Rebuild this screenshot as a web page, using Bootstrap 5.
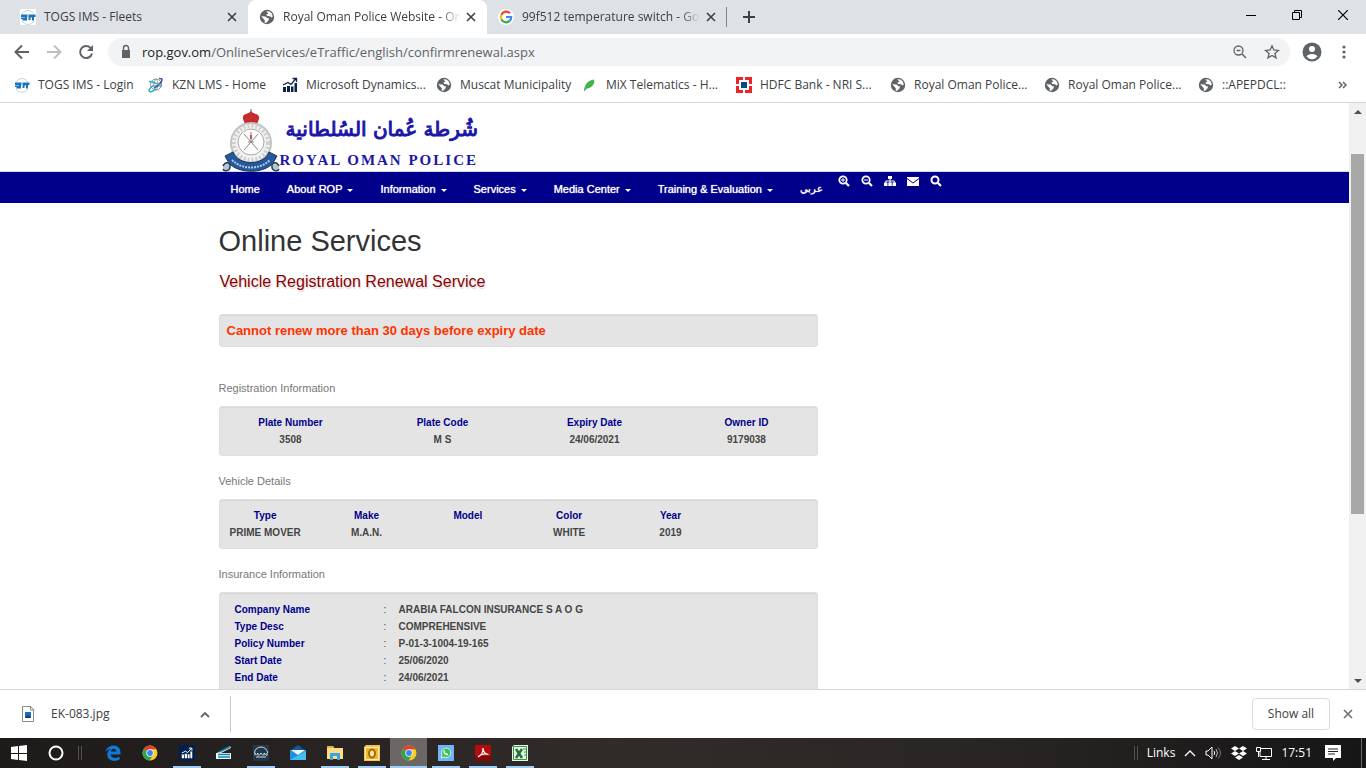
<!DOCTYPE html>
<html lang="en">
<head>
<meta charset="utf-8">
<meta name="viewport" content="width=device-width, initial-scale=1">
<title>Royal Oman Police Website - Online Services</title>
<link rel="stylesheet" href="https://cdn.jsdelivr.net/npm/bootstrap@5.3.0/dist/css/bootstrap.min.css">
<script src="https://cdn.jsdelivr.net/npm/bootstrap@5.3.0/dist/js/bootstrap.bundle.min.js"></script>
<style>
  :root { --ui: "Open Sans", "Noto Sans", sans-serif; --site: "Liberation Sans", Arial, sans-serif; --ink: #3c4043; --grey: #5f6368; }
  body { font-family: var(--ui); font-size: 12px; line-height: 16px; color: var(--ink); background: #fff; }
  svg { display: block; flex: none; }
  button { border: 0; background: none; padding: 0; color: inherit; font: inherit; }
  a { color: inherit; text-decoration: none; }

  /* browser frame */
  .tabstrip { background: #dee1e6; height: 34px; padding-left: 9px; }
  .tab-item { width: 239px; height: 34px; padding: 0 11px; }
  .tab-item.current { background: #fff; border-radius: 8px 8px 0 0; }
  .tab-title { flex: 1; margin-left: 8px; white-space: nowrap; }
  .tab-title.fade-end { -webkit-mask-image: linear-gradient(to right, #000 86%, transparent 97%); mask-image: linear-gradient(to right, #000 86%, transparent 97%); }
  .tab-sep { width: 1px; height: 20px; background: #80868b; }
  .win-btn { width: 46px; height: 30px; color: #000; }
  .toolbar { height: 36px; padding: 0 16px 0 12px; }
  .tool-btn { width: 32px; height: 28px; }
  .omnibox { height: 28px; border-radius: 14px; background: #f1f3f4; padding: 0 10px; font-size: 13px; }
  .omnibox input { border: 0; background: none; padding: 0; outline: 0; font: inherit; color: var(--grey); min-width: 0; }
  .bookmarks { height: 33px; padding: 0 14px 2px; border-bottom: 1px solid #d5d7da; }
  .bm { display: flex; align-items: center; gap: 8px; white-space: nowrap; flex: none; width: 154px; }
  .bm-short { width: 134px; }
  .bm-mid { width: 146px; }

  /* scroll bar */
  .scroll-track { width: 17px; background: #f1f1f1; }
  .scroll-top { height: 51px; padding-top: 6px; }
  .scroll-thumb { width: 13px; height: 360px; background: #a8a8a8; }

  /* site */
  .site { font-family: var(--site); min-width: 0; }
  .site-wrap { max-width: 936px; padding: 0 12px; margin: 0 auto; }
  .brand-row { height: 68px; padding: 5px 0 0 3px; }
  .brand-ar { font-family: "DejaVu Sans", sans-serif; font-size: 20px; line-height: 42px; color: #1c16a8; white-space: nowrap; height: 42px; -webkit-text-stroke: 1px #1c16a8; paint-order: stroke; }
  .brand-en { font-family: "Liberation Serif", serif; font-weight: 700; font-size: 15px; line-height: 20px; letter-spacing: 2px; color: #1c16a8; white-space: nowrap; }
  .site-nav { background: #00008b; border-top: 1px solid #d6d8e6; height: 32px; }
  .site-nav a { color: #fff; font-size: 11px; line-height: 16px; text-shadow: 0 0 1px #fff; white-space: nowrap; }
  .site-nav .dropdown-toggle::after { border-width: 3px 3px 0; margin-left: 5px; vertical-align: 1px; }
  .menu-links { gap: 27px; padding: 2px 15px 0 12px; }
  .menu-links a:lang(ar) { font-size: 10px; }
  .nav-tools { padding-bottom: 13px; gap: 11px; }
  h1 { font-size: 29px; line-height: 32px; font-weight: 400; color: #333; margin: 22px 0 0; }
  h2 { font-size: 16px; line-height: 20px; font-weight: 400; color: #8b0000; margin: 15px 0 0 1px; text-shadow: 1px 2px 1px #ddd; }
  h3 { font-size: 11px; line-height: 16px; font-weight: 400; color: #777; margin: 17px 0 10px; }
  .panel { background: #e4e4e4; border: 1px solid #dfdfdf; border-radius: 3px; box-shadow: inset 0 1px 1px #d8d8d8; }
  .warn { margin: 22px 0 33px; padding: 6px 7px 5px; font-size: 13px; line-height: 20px; font-weight: 700; color: #ff3300; }
  .panel table { font-size: 10px; line-height: 17px; font-weight: 700; color: #444; }
  .panel th { color: #00008b; }
  .panel th, .panel td { padding: 0; }
  .grid-panel { padding: 7px 0; }
  .grid-panel table { width: calc(100% + 10px); margin: 0 -5px; table-layout: fixed; text-align: center; }
  .list-panel { padding: 8px 15px 40px; }
  .c-label { width: 149px; }
  .c-colon { width: 15px; font-weight: 400; }

  /* download shelf */
  .shelf { height: 49px; border-top: 1px solid #d5d7da; padding: 0 13px 0 21px; }
  .dl-item { height: 36px; width: 210px; border-right: 1px solid #c8c8c8; }
  .show-all { height: 32px; width: 78px; margin-right: 13px; border: 1px solid #dadce0; border-radius: 4px; color: #3c4043; }

  /* task bar */
  .taskbar { height: 30px; background: linear-gradient(90deg, #1d1a1a, #322c29 45%, #2a2625 70%, #161616); color: #fff; }
  .task { width: 37px; height: 30px; display: flex; align-items: center; justify-content: center; position: relative; }
  .task.running::after { content: ""; position: absolute; bottom: 0; left: 5px; right: 4px; height: 2px; background: #a0cdf8; }
  .task.focused { background: #6b6765; }
  .task.focused::after { left: 0; right: 0; }
  .grip { width: 4px; height: 14px; border: solid #55504e; border-width: 0 1px; }
  .tray { gap: 9px; }
  .edge-line { width: 1px; height: 30px; margin: 0 4px 0 11px; background: #686868; }
</style>
</head>
<body class="vh-100 d-flex flex-column overflow-hidden">

<svg width="0" height="0" class="position-absolute" aria-hidden="true">
  <symbol id="i-x" viewBox="0 0 10 10"><path d="M1 1l8 8M9 1l-8 8" stroke="currentColor" stroke-width="1.6"/></symbol>
  <symbol id="i-globe" viewBox="0 0 16 16"><circle cx="8" cy="8" r="7.2" fill="#5f6368"/><path d="M2.2 7.200 6.500 7.400 8.400 9.300H10L9.600 11.200 7 13.900 5.500 13.300 5.900 11.200 4.400 9.800ZM7.200 2.200 10.500 2.500 12.800 4.500 13.800 7.500 12.600 8.500 11 7.200 8.300 7 7.300 5.700 9.300 4.500Z" fill="#fff"/></symbol>
  <symbol id="i-togs" viewBox="0 0 16 16"><path d="M2 5a7 7 0 0 1 12 0M2 12a7 7 0 0 0 12 0" fill="none" stroke="#c9d2da"/><path d="M1 5.500h14.500V8H14v3.500h-2V8.500h-1.500V11H8.500V8H7v3.500H2.500V10H1V8.500h4V8H1Z" fill="#1676bd"/><path d="M8 5v3" stroke="#fff"/></symbol>
  <symbol id="i-dyn" viewBox="0 0 16 16"><path d="M1 10h3v5H1ZM5 9h3v6H5ZM9 9.500h2.500V15H9ZM12.500 6H15v9h-2.500Z" fill="currentColor"/><path d="M1 8l5-2.500 3 2 5-6M10.500 1.500h4V5" fill="none" stroke="currentColor" stroke-width="1.300"/></symbol>
  <symbol id="i-chrome" viewBox="0 0 16 16"><circle cx="8" cy="8" r="7.500" fill="#f9ce1d"/><path d="M8 8 1.500 4.200A7.500 7.500 0 0 1 14.500 4.300H8Z" fill="#de4134"/><path d="M8 8 1.500 4.200A7.500 7.500 0 0 0 7.600 15.500L11 10Z" fill="#2da553"/><circle cx="8" cy="8" r="3.700" fill="#fff"/><circle cx="8" cy="8" r="2.900" fill="#3f83ee"/></symbol>
</svg>

<header class="flex-shrink-0">
  <div class="tabstrip d-flex align-items-center">
    <div class="tab-item d-flex align-items-center">
      <svg width="16" height="16"><rect width="16" height="16" fill="#fff"/><use href="#i-togs"/></svg>
      <span class="tab-title">TOGS IMS - Fleets</span>
      <button aria-label="Close tab"><svg width="10" height="10"><use href="#i-x"/></svg></button>
    </div>
    <div class="tab-item current d-flex align-items-center">
      <svg width="16" height="16"><use href="#i-globe"/></svg>
      <span class="tab-title fade-end">Royal Oman Police Website - Onl</span>
      <button aria-label="Close tab"><svg width="10" height="10"><use href="#i-x"/></svg></button>
    </div>
    <div class="tab-item d-flex align-items-center">
      <svg width="16" height="16" viewBox="0 0 16 16"><circle cx="8" cy="8" r="8" fill="#fff"/><g fill="none" stroke-width="2.200"><path d="M12 4.200A5.200 5.200 0 0 0 3.400 5.800" stroke="#ea4335"/><path d="M3.400 5.800a5.200 5.200 0 0 0 0 4.600" stroke="#fbbc05"/><path d="M3.400 10.400a5.200 5.200 0 0 0 8.200 1.500" stroke="#34a853"/><path d="M11.600 11.900A5.200 5.200 0 0 0 13.200 8H8" stroke="#4285f4"/></g></svg>
      <span class="tab-title fade-end">99f512 temperature switch - Goo</span>
      <button aria-label="Close tab"><svg width="10" height="10"><use href="#i-x"/></svg></button>
    </div>
    <div class="tab-sep"></div>
    <button class="ms-3" aria-label="New tab"><svg width="12" height="12" viewBox="0 0 12 12"><path d="M6 0v12M0 6h12" stroke="#3c4043" stroke-width="2"/></svg></button>
    <div class="ms-auto d-flex align-self-start">
      <button class="win-btn d-flex align-items-center justify-content-center" aria-label="Minimise"><svg width="10" height="10"><path d="M0 5.500h10" stroke="#000"/></svg></button>
      <button class="win-btn d-flex align-items-center justify-content-center" aria-label="Restore"><svg width="10" height="10"><path d="M.5 2.500h7v7h-7ZM2.500 2V.5h7v7H8" fill="none" stroke="#000"/></svg></button>
      <button class="win-btn d-flex align-items-center justify-content-center" aria-label="Close"><svg width="10" height="10"><path d="M0 0l10 10M10 0 0 10" stroke="#000" stroke-width="1.200"/></svg></button>
    </div>
  </div>

  <div class="toolbar d-flex align-items-center">
    <button class="tool-btn" aria-label="Back"><svg width="20" height="20" viewBox="0 0 20 20"><path d="M17 10H4M10 3.500 3.500 10l6.500 6.500" fill="none" stroke="#5f6368" stroke-width="2"/></svg></button>
    <button class="tool-btn" aria-label="Forward"><svg width="20" height="20" viewBox="0 0 20 20"><path d="M3 10h13M10 3.500 16.500 10 10 16.500" fill="none" stroke="#bdc1c6" stroke-width="2"/></svg></button>
    <button class="tool-btn" aria-label="Reload"><svg width="20" height="20" viewBox="0 0 20 20"><path d="M15 6.500A6 6 0 1 0 16 11.500" fill="none" stroke="#5f6368" stroke-width="2"/><path d="M17 3v6h-6Z" fill="#5f6368"/></svg></button>
    <div class="omnibox d-flex align-items-center flex-grow-1">
      <svg width="16" height="16" viewBox="0 0 16 16"><path d="M4 6h8v8H4Z" fill="#5f6368"/><path d="M5.500 6V4a2.500 2.500 0 0 1 5 0v2" fill="none" stroke="#5f6368" stroke-width="1.400"/></svg>
      <label class="text-dark ms-2" for="address">rop.gov.om</label>
      <input class="flex-grow-1" id="address" type="text" value="/OnlineServices/eTraffic/english/confirmrenewal.aspx">
      <button aria-label="Zoom"><svg width="16" height="16" viewBox="0 0 16 16"><circle cx="6.500" cy="6.500" r="4.500" fill="none" stroke="#5f6368" stroke-width="1.300"/><path d="M10 10l4 4M4.500 6.500h4" stroke="#5f6368" stroke-width="1.500"/></svg></button>
      <button class="ms-3" aria-label="Bookmark this page"><svg width="16" height="16" viewBox="0 0 16 16"><path d="M8 1.800 9.800 6l4.600.4-3.500 3 1.100 4.500L8 11.500l-4 2.400 1.100-4.500-3.500-3L6.200 6Z" fill="none" stroke="#5f6368" stroke-width="1.300"/></svg></button>
    </div>
    <button class="ms-2 ps-1" aria-label="Profile"><svg width="20" height="20" viewBox="0 0 20 20"><circle cx="10" cy="10" r="9.500" fill="#5f6368"/><circle cx="10" cy="7" r="3" fill="#fff"/><path d="M4.500 14.500c1-3.500 10-3.500 11 0a7 7 0 0 1-11 0Z" fill="#fff"/></svg></button>
    <button class="ms-3" aria-label="Menu"><svg width="12" height="16" viewBox="0 0 12 16" fill="#5f6368"><circle cx="6" cy="3" r="1.600"/><circle cx="6" cy="8" r="1.600"/><circle cx="6" cy="13" r="1.600"/></svg></button>
  </div>

  <nav class="bookmarks d-flex align-items-center" aria-label="Bookmarks">
    <a class="bm bm-short" href="#"><svg width="16" height="16"><use href="#i-togs"/></svg>TOGS IMS - Login</a>
    <a class="bm bm-short" href="#"><svg width="16" height="16" viewBox="0 0 16 16" fill="none"><circle cx="8" cy="7.500" r="5.500" stroke="#8b8f98"/><path d="M3 5c3 2 7 2 10 0M3 10c3-2 7-2 10 0M8 2c-3 4-3 7 0 11M8 2c3 4 3 7 0 11" stroke="#8b8f98" stroke-width=".8"/><path d="M11 1.500c2 0 3.500 0 3 1.500-1 4-6 7-8 8" stroke="#5b4a9c" stroke-width="1.500"/><path d="M1 4.500c4-1 8 3 13 4.500M1 14c1 1.500 4 .5 7-2M1 14c0-2 2-4 5-6" stroke="#25b7c4" stroke-width="1.500"/></svg>KZN LMS - Home</a>
    <a class="bm" href="#"><svg width="16" height="16" color="#0b2150"><use href="#i-dyn"/></svg>Microsoft Dynamics...</a>
    <a class="bm bm-mid" href="#"><svg width="16" height="16"><use href="#i-globe"/></svg>Muscat Municipality</a>
    <a class="bm" href="#"><svg width="16" height="16" viewBox="0 0 16 16"><path d="M2 14.500C2 8 6 3 12 2.500 13.500 7 9 11.500 5 11.500Z" fill="#47b04b"/></svg>MiX Telematics - H...</a>
    <a class="bm" href="#"><svg width="16" height="16" viewBox="0 0 16 16"><path d="M0 0h16v16H0Z" fill="#ed232a"/><path d="M3 3h10v10H3ZM7 0h2v16H7ZM0 7h16v2H0Z" fill="#fff"/><path d="M5 5h6v6H5Z" fill="#004c8f"/></svg>HDFC Bank - NRI S...</a>
    <a class="bm" href="#"><svg width="16" height="16"><use href="#i-globe"/></svg>Royal Oman Police...</a>
    <a class="bm" href="#"><svg width="16" height="16"><use href="#i-globe"/></svg>Royal Oman Police...</a>
    <a class="bm bm-short" href="#"><svg width="16" height="16"><use href="#i-globe"/></svg>::APEPDCL::</a>
    <button class="ms-auto me-1" aria-label="More bookmarks"><svg width="10" height="8" viewBox="0 0 10 8"><path d="M1 1l3 3-3 3M5 1l3 3-3 3" fill="none" stroke="#5f6368" stroke-width="1.500"/></svg></button>
  </nav>
</header>

<div class="d-flex flex-grow-1 overflow-hidden">
  <div class="site flex-grow-1 overflow-hidden">
    <div class="site-wrap">
      <div class="brand-row d-flex">
        <svg width="58" height="64" viewBox="0 0 58 64">
          <path d="M21 11c-1-6 5-4 8-8 3 4 9 2 8 8l-2 5H23Z" fill="#d3242b"/><path d="M22 12c5-3 9-3 14 0M29 1v8" stroke="#8e4f50" fill="none"/>
          <circle cx="29" cy="35" r="20" fill="#f2f2f2" stroke="#c2c2c2" stroke-width="2"/>
          <circle cx="29" cy="35" r="17" fill="none" stroke="#cfcfcf" stroke-width="4" stroke-dasharray="2 2"/>
          <circle cx="29" cy="34" r="13" fill="#fcfcfc" stroke="#aaa"/>
          <path d="M22 26l14 16M36 26 22 42M29 24v10M26 34h6" stroke="#888" fill="none"/><path d="M28 27h2v4h-2Z" fill="#c7504c"/>
          <path d="M3 48 11 44C16 58 42 58 47 44l8 4-4 7c-9 11-35 11-44 0Z" fill="#245a9c" stroke="#17375f"/>
          <path d="M10 52c10 10 28 10 38 0" fill="none" stroke="#b9c9d8" stroke-width="2" stroke-dasharray="2 1"/>
          <path d="M1 58c2-5 8-4 7 1 0 4-6 5-7 2M57 58c-2-5-8-4-7 1 0 4 6 5 7 2" fill="#b9c4cc" stroke="#26415f" stroke-width="1.500"/>
        </svg>
        <div>
          <div class="brand-ar" lang="ar" dir="rtl">شُرطة عُمان السُلطانية</div>
          <div class="brand-en">ROYAL OMAN POLICE</div>
        </div>
      </div>
    </div>
    <nav class="site-nav">
      <div class="site-wrap h-100 d-flex align-items-center">
        <div class="menu-links d-flex align-items-center">
          <a href="#">Home</a>
          <a class="dropdown-toggle" href="#">About ROP</a>
          <a class="dropdown-toggle" href="#">Information</a>
          <a class="dropdown-toggle" href="#">Services</a>
          <a class="dropdown-toggle" href="#">Media Center</a>
          <a class="dropdown-toggle" href="#">Training &amp; Evaluation</a>
          <a href="#" lang="ar">عربي</a>
        </div>
        <div class="nav-tools d-flex">
          <a href="#" aria-label="Zoom in"><svg width="12" height="12" viewBox="0 0 12 12" fill="none" stroke="#fff"><circle cx="5" cy="5" r="3.700" stroke-width="1.800"/><path d="M8 8l3 3" stroke-width="2.200"/><path d="M3 5h4M5 3v4"/></svg></a>
          <a href="#" aria-label="Zoom out"><svg width="12" height="12" viewBox="0 0 12 12" fill="none" stroke="#fff"><circle cx="5" cy="5" r="3.700" stroke-width="1.800"/><path d="M8 8l3 3" stroke-width="2.200"/><path d="M3 5h4"/></svg></a>
          <a href="#" aria-label="Site map"><svg width="12" height="12" viewBox="0 0 12 12"><path d="M4 1h4v3H4ZM0 7.500h3.500V11H0ZM4.300 7.500h3.500V11H4.300ZM8.500 7.500H12V11H8.500Z" fill="#fff"/><path d="M6 4v4M1.800 8V6h8.500v2" fill="none" stroke="#fff"/></svg></a>
          <a href="#" aria-label="Mail"><svg width="12" height="12" viewBox="0 0 12 12"><path d="M0 2h12v9H0Z" fill="#fff"/><path d="M0 3.500 6 8l6-4.500" fill="none" stroke="#00008b"/></svg></a>
          <a href="#" aria-label="Search"><svg width="12" height="12" viewBox="0 0 12 12" fill="none" stroke="#fff"><circle cx="5" cy="5" r="3.500" stroke-width="2"/><path d="M8 8l3 3" stroke-width="2.200"/></svg></a>
        </div>
      </div>
    </nav>
    <main class="site-wrap">
      <div class="row gx-4">
        <div class="col-8">
          <h1>Online Services</h1>
          <h2>Vehicle Registration Renewal Service</h2>
          <div class="panel warn">Cannot renew more than 30 days before expiry date</div>

          <h3>Registration Information</h3>
          <div class="panel grid-panel">
            <table>
              <thead><tr><th>Plate Number</th><th>Plate Code</th><th>Expiry Date</th><th>Owner ID</th></tr></thead>
              <tbody><tr><td>3508</td><td>M S</td><td>24/06/2021</td><td>9179038</td></tr></tbody>
            </table>
          </div>

          <h3>Vehicle Details</h3>
          <div class="panel grid-panel">
            <table>
              <thead><tr><th>Type</th><th>Make</th><th>Model</th><th>Color</th><th>Year</th><th></th></tr></thead>
              <tbody><tr><td>PRIME MOVER</td><td>M.A.N.</td><td></td><td>WHITE</td><td>2019</td><td></td></tr></tbody>
            </table>
          </div>

          <h3>Insurance Information</h3>
          <div class="panel list-panel">
            <table>
              <tbody>
                <tr><th class="c-label">Company Name</th><td class="c-colon">:</td><td>ARABIA FALCON INSURANCE S A O G</td></tr>
                <tr><th>Type Desc</th><td class="c-colon">:</td><td>COMPREHENSIVE</td></tr>
                <tr><th>Policy Number</th><td class="c-colon">:</td><td>P-01-3-1004-19-165</td></tr>
                <tr><th>Start Date</th><td class="c-colon">:</td><td>25/06/2020</td></tr>
                <tr><th>End Date</th><td class="c-colon">:</td><td>24/06/2021</td></tr>
              </tbody>
            </table>
          </div>
        </div>
      </div>
    </main>
  </div>
  <div class="scroll-track d-flex flex-column align-items-center">
    <div class="scroll-top"><svg width="8" height="5"><path d="M0 5l4-4 4 4Z" fill="#505050"/></svg></div>
    <div class="scroll-thumb"></div>
    <svg class="mt-auto mb-1" width="8" height="6"><path d="M0 0l4 4 4-4Z" fill="#505050"/></svg>
  </div>
</div>

<div class="shelf d-flex align-items-center flex-shrink-0">
  <div class="dl-item d-flex align-items-center">
    <svg width="14" height="18" viewBox="0 0 14 18"><path d="M1.500 1.500h8l3 3v12h-11Z" fill="#fff" stroke="#8a8a8a"/><path d="M9.500 1v4h4" fill="none" stroke="#8a8a8a"/><path d="M4 7h6v6H4Z" fill="#1a6fb8"/><path d="M4 13l3-3 3 3Z" fill="#0b3b73"/></svg>
    <span class="ms-3">EK-083.jpg</span>
    <button class="ms-auto me-3 pe-1" aria-label="Download options"><svg width="10" height="7" viewBox="0 0 10 7"><path d="M1 6l4-4 4 4" fill="none" stroke="#5f6368" stroke-width="1.800"/></svg></button>
  </div>
  <button class="show-all ms-auto">Show all</button>
  <button aria-label="Close downloads bar"><svg width="10" height="10" color="#6b6f73"><use href="#i-x"/></svg></button>
</div>

<footer class="taskbar d-flex align-items-center flex-shrink-0">
  <button class="task" aria-label="Start"><svg width="16" height="16" fill="#fff"><path d="M0 2l7-1v7H0ZM8 1l8-1v8H8ZM0 9h7v6l-7-1ZM8 9h8v7l-8-1Z"/></svg></button>
  <button class="task" aria-label="Cortana"><svg width="16" height="16"><circle cx="8" cy="8" r="6.500" fill="none" stroke="#fff" stroke-width="2"/></svg></button>
  <span class="grip mx-1"></span>
  <button class="task ms-2" aria-label="Edge"><svg width="16" height="16" viewBox="0 0 16 16"><path d="M.5 7.500C1.500 2.500 5 .5 8.500.5c4.500 0 7 3.200 7 7v2H5.500c.2 3.800 5.500 4.300 9 2.300v3c-5 2.400-12 1.200-12.200-5C2.200 7 3.500 5 6 4 3.500 4 1.500 5.500.5 7.500ZM5.700 6.600h5.600c0-3.800-5-3.600-5.600 0Z" fill="#0f7ad8"/></svg></button>
  <button class="task" aria-label="Chrome"><svg width="16" height="16"><use href="#i-chrome"/></svg></button>
  <button class="task running" aria-label="Dynamics"><svg width="16" height="16" viewBox="0 0 16 16" color="#fff"><rect width="16" height="16" fill="#002050"/><use href="#i-dyn" x="2" y="2" width="12" height="12"/></svg></button>
  <button class="task" aria-label="Scanner"><svg width="16" height="16" viewBox="0 0 16 16"><path d="M1 8 14 1l1 2L5 8h10v6H0V8Z" fill="#eef7fb"/><path d="M2 9.500h12M2 12h12M3 7 14 2" stroke="#1686b5" stroke-width="1.500"/></svg></button>
  <button class="task running" aria-label="MAN"><svg width="16" height="16" viewBox="0 0 16 16"><rect width="16" height="16" fill="#20384a"/><path d="M1.500 8a6.500 6 0 0 1 13 0M3 12h10" fill="none" stroke="#d6dde2"/><path d="M2 10.500V8l1.500 1.500L5 8v2.500M6 10.500 8 8l2 2.500M11 10.500V8l3 2.500V8" fill="none" stroke="#d6dde2"/></svg></button>
  <button class="task" aria-label="Mail"><svg width="16" height="16" viewBox="0 0 16 16"><path d="M0 6 8 0l8 6Z" fill="#0c5a9c"/><path d="M0 5h16v10H0Z" fill="#1c91df"/><path d="M1 5h14L8 10Z" fill="#f5f8fa"/><path d="M0 15 16 6v9Z" fill="#42bdf2"/></svg></button>
  <button class="task running" aria-label="File Explorer"><svg width="16" height="16" viewBox="0 0 16 16"><path d="M0 1h6l1 2h9v11H0Z" fill="#fbdd85"/><path d="M0 1h6l1 2H0Z" fill="#e6b53c"/><path d="M3 15V8h10v7h-3v-4H6v4Z" fill="#39a5dc"/></svg></button>
  <button class="task running" aria-label="Outlook"><svg width="16" height="16" viewBox="0 0 16 16"><path d="M2 0h14v16H0V2Z" fill="#f5c64a"/><path d="M1.500 2.500h13v12h-13Z" fill="#f2b632" stroke="#fff0b8"/><ellipse cx="8" cy="8.500" rx="3" ry="4" fill="#fde9b0" stroke="#a8680c" stroke-width="2"/></svg></button>
  <button class="task running focused" aria-label="Chrome window"><svg width="16" height="16"><use href="#i-chrome"/></svg></button>
  <button class="task running" aria-label="WhatsApp"><svg width="16" height="16" viewBox="0 0 16 16"><rect width="16" height="16" fill="#70b3f7"/><path d="M3 13l1-3a4.700 4.700 0 1 1 2 2Z" fill="#36c35b" stroke="#d8f0e0"/><path d="M6 5.500c0 2.500 1.500 4 4 4" fill="none" stroke="#fff" stroke-width="1.500"/></svg></button>
  <button class="task running" aria-label="Acrobat"><svg width="16" height="16" viewBox="0 0 16 16"><rect width="16" height="16" fill="#b40b0b"/><rect y="11" width="16" height="5" fill="#870606"/><path d="M3 12c3-1 5-5 5-9 0 4 2 6 5.500 6.500C10 8.500 6 9 3 12Z" fill="none" stroke="#fff" stroke-width="1.200"/></svg></button>
  <button class="task running" aria-label="Excel"><svg width="16" height="16" viewBox="0 0 16 16"><path d="M2 0h14v16H0V2Z" fill="#e9f4e6"/><path d="M1.500 1.500h13v13h-13Z" fill="none" stroke="#39934a"/><path d="M4 4l6 9M10 4l-6 9" stroke="#1d7435" stroke-width="2.500"/><path d="M11 4h3M12 7h2M12 10h2" stroke="#39934a"/></svg></button>

  <div class="tray d-flex align-items-center ms-auto">
    <span class="grip"></span>
    <span>Links</span>
    <svg width="12" height="8"><path d="M1 7l5-5 5 5" fill="none" stroke="#fff" stroke-width="1.300"/></svg>
    <svg width="17" height="16" viewBox="0 0 17 16" fill="none" stroke="#fff"><path d="M1 6h2l4-4v12l-4-4H1Z"/><path d="M9 6q1.500 2 0 4"/><path d="M11 4q3 4 0 8" stroke="#bbb"/><path d="M13 2.500q5 5.500 0 11" stroke="#777"/></svg>
    <svg width="16" height="16" viewBox="0 0 16 16" fill="#fff"><path d="M4 1l4 2.500L4 6 0 3.500ZM12 1l4 2.500L12 6 8 3.500ZM4 6l4 2.500L4 11 0 8.500ZM12 6l4 2.500L12 11 8 8.500ZM8 10l4 2.500L8 15l-4-2.500Z"/></svg>
    <svg width="16" height="16" viewBox="0 0 16 16" fill="none" stroke="#fff"><path d="M5 3.500h10.500v8H4V7M10 12v2M6 14.500h8M.5 2.500h4v4h-4ZM2.500 7v5"/></svg>
    <time>17:51</time>
    <button class="ms-1" aria-label="Notifications"><svg width="16" height="16" viewBox="0 0 16 16"><path d="M0 0h16v13h-5l-3 3v-3H0Z" fill="#fff"/><path d="M3 4h10M3 6.500h10M3 9h7" stroke="#222"/></svg></button>
    <span class="edge-line"></span>
  </div>
</footer>
</body>
</html>
